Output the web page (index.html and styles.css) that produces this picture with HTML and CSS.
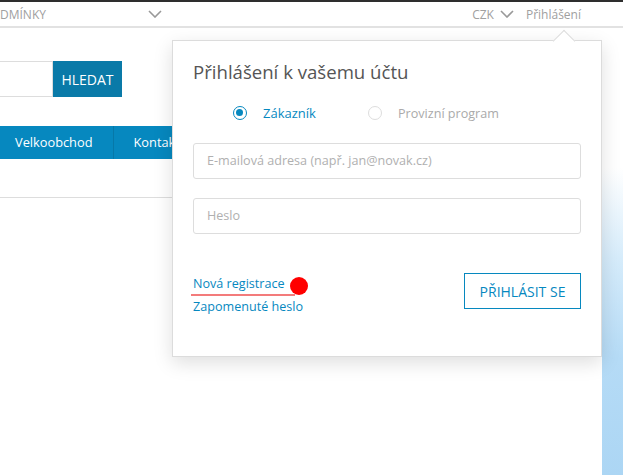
FILE: index.html
```html
<!DOCTYPE html>
<html lang="cs">
<head>
<meta charset="utf-8">
<link rel="stylesheet" href="styles.css">
</head>
<body>
<div class="topline"></div>
<header class="topbar">
  <div class="terms">
    <span class="terms-label">DMÍNKY</span>
    <svg class="chev chev-terms" width="14" height="8" viewBox="0 0 14 8"><path d="M1 1l6 6 6-6" fill="none" stroke="#999" stroke-width="1.6"/></svg>
  </div>
  <div class="account">
    <span class="cur">CZK</span>
    <svg class="chev" width="14" height="8" viewBox="0 0 14 8"><path d="M1 1l6 6 6-6" fill="none" stroke="#999" stroke-width="1.6"/></svg>
    <span class="login-link">Přihlášení</span>
  </div>
</header>
<div class="below">
  <main class="main">
    <form class="search">
      <div class="search-input"></div>
      <button type="button" class="search-btn">HLEDAT</button>
    </form>
    <nav class="nav">
      <span class="nav-item">Velkoobchod</span>
      <span class="nav-item">Kontakty</span>
    </nav>
    <div class="rule"></div>
  </main>
  <aside class="strip"></aside>
</div>

<div class="popup">
  <h2 class="popup-title">Přihlášení k vašemu účtu</h2>
  <div class="radios">
    <label class="radio active"><span class="dot"></span>Zákazník</label>
    <label class="radio"><span class="dot"></span>Provizní program</label>
  </div>
  <div class="field">E-mailová adresa (např. jan@novak.cz)</div>
  <div class="field">Heslo</div>
  <div class="actions">
    <div class="links">
      <span class="reg">Nová registrace<span class="marker"></span></span>
      <span class="forgot">Zapomenuté heslo</span>
    </div>
    <button type="button" class="submit">PŘIHLÁSIT SE</button>
  </div>
</div>
</body>
</html>
```
FILE: styles.css
```css
* { box-sizing: border-box; }
html, body { margin: 0; padding: 0; }
body {
  width: 623px;
  height: 475px;
  overflow: hidden;
  position: relative;
  font-family: "Open Sans", "Noto Sans", sans-serif;
  background: #fff;
  color: #555;
}
.topline { height: 2px; background: #2e2e2e; }
.topbar {
  height: 26px;
  border-bottom: 2px solid #e2e2e2;
  display: flex;
  align-items: center;
  justify-content: space-between;
  font-size: 12px;
  color: #a0a0a0;
}
.terms { display: flex; align-items: center; }
.terms-label { width: 148px; }
.chev { display: block; }
.account { display: flex; align-items: center; padding-right: 42px; }
.account .chev { margin: 0 12px 0 6px; }
.below { display: flex; height: 447px; }
.main { flex: 1; }
.strip {
  width: 21px;
  background: linear-gradient(to bottom, #fff 0, #fff 140px, #d6ecfb 230px, #b5dbf6 330px, #acd6f4 100%);
}
.search { display: flex; margin: 33px 0 0; height: 36px; }
.search-input { width: 53px; border: 1px solid #ddd; border-left: 0; }
.search-btn {
  width: 69px; border: 0; background: #0a7aa8; color: #fff;
  font: 14px "Open Sans", sans-serif; padding: 0;
}
.nav {
  margin-top: 29px; height: 33px; background: #0688bf;
  display: flex; align-items: center; font-size: 12.8px; color: #fff;
}
.nav-item { padding: 0 20px 0 15px; line-height: 33px; border-right: 1px solid #0678a8; }
.nav-item + .nav-item { padding-left: 20px; }
.rule { margin-top: 38px; height: 1px; background: #ddd; }

.popup {
  position: absolute;
  left: 172px; top: 40px;
  width: 430px; height: 317px;
  background: #fff;
  border: 1px solid #dcdcdc;
  box-shadow: 0 6px 18px rgba(0,0,0,0.13);
  padding: 17px 20px 0 20px;
}
.popup::before {
  content: ""; position: absolute; top: -8px; left: 383px;
  width: 15px; height: 15px; background: #fff;
  border-left: 1px solid #dcdcdc; border-top: 1px solid #dcdcdc;
  transform: rotate(45deg);
}
.popup-title { margin: 0; font-weight: 400; font-size: 18.6px; color: #555; line-height: 28px; }
.radios { display: flex; margin: 17px 0 0 40px; height: 20px; align-items: center; font-size: 13px; }
.radio { display: flex; align-items: center; color: #aaa; width: 135px; }
.radio + .radio { font-size: 12.6px; }
.radio .dot {
  width: 14px; height: 14px; border-radius: 50%; border: 1px solid #ddd;
  margin-right: 16px; position: relative;
}
.radio.active { color: #0688bf; }
.radio.active .dot { border: 1.5px solid #0688bf; }
.radio.active .dot::after {
  content: ""; position: absolute; left: 2px; top: 2px; width: 7px; height: 7px;
  border-radius: 50%; background: #0688bf;
}
.field {
  height: 36px; border: 1px solid #ddd; border-radius: 3px; margin-top: 20px;
  padding-left: 13px; line-height: 34px; font-size: 12.6px; color: #b0b0b0;
}
.field + .field { margin-top: 19px; }
.actions { display: flex; justify-content: space-between; align-items: flex-start; margin-top: 39px; }
.links { display: flex; flex-direction: column; align-items: flex-start; font-size: 12.6px; color: #0688bf; padding-top: 2px; }
.reg {
  position: relative; border-bottom: 2px solid #f37b7b; padding: 0 10px 2px 2px; margin-left: -2px;
}
.marker {
  position: absolute; right: -13px; top: 2px; width: 18px; height: 18px; border-radius: 50%; background: #f00;
}
.forgot { margin-top: 2px; }
.submit {
  width: 117px; height: 36px; border: 1.5px solid #0688bf; background: #fff; color: #0688bf;
  font: 14px "Open Sans", sans-serif; padding: 0;
}
```
